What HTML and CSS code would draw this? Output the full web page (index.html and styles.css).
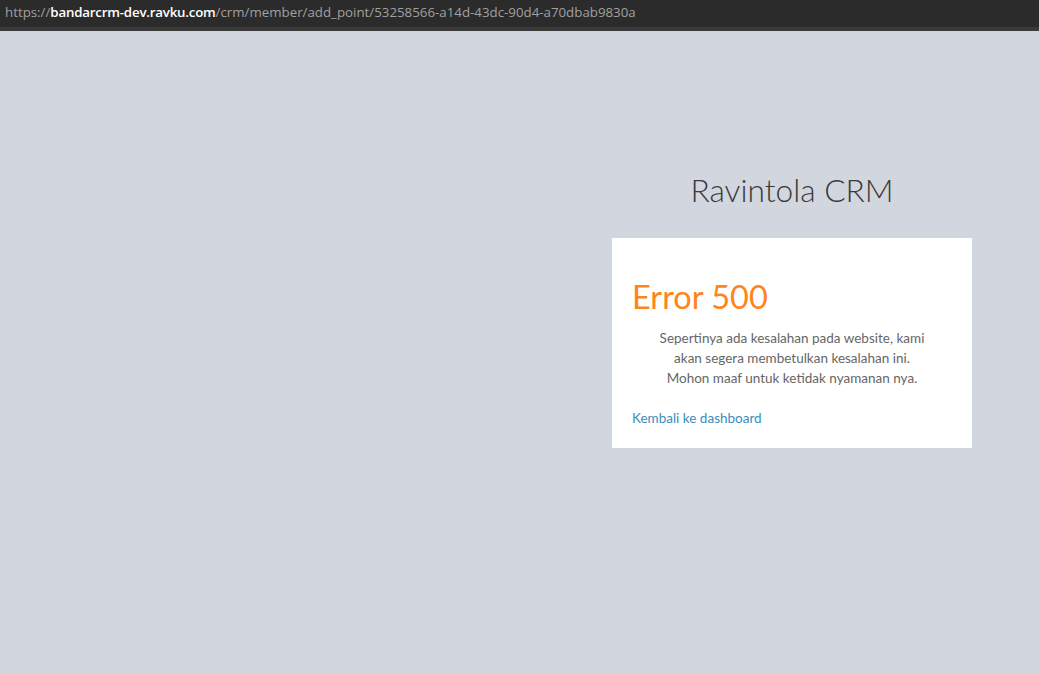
FILE: index.html
```html
<!DOCTYPE html>
<html lang="id">
<head>
<meta charset="utf-8">
<title>Ravintola CRM - Error 500</title>
<link rel="stylesheet" href="styles.css">
</head>
<body>
<div class="urlbar"><span class="scheme">https://</span><span class="host">bandarcrm-dev.ravku.com</span><span class="path">/crm/member/add_point/53258566-a14d-43dc-90d4-a70dbab9830a</span></div>
<main class="page">
  <div class="login-box">
    <div class="login-logo">Ravintola CRM</div>
    <div class="login-box-body">
      <h2 class="headline">Error 500</h2>
      <p class="message">Sepertinya ada kesalahan pada website, kami<br>akan segera membetulkan kesalahan ini.<br>Mohon maaf untuk ketidak nyamanan nya.</p>
      <a class="back" href="#">Kembali ke dashboard</a>
    </div>
  </div>
</main>
</body>
</html>
```
FILE: styles.css
```css
html, body {
  margin: 0;
  padding: 0;
  height: 100%;
}
body {
  background: #d2d6de;
  font-family: Lato, "Open Sans", sans-serif;
  display: flex;
  flex-direction: column;
}
.urlbar {
  height: 27px;
  background: #2b2b2b;
  border-bottom: 4px solid #3a3a3a;
  font-family: "Open Sans", sans-serif;
  font-size: 13.3px;
  line-height: 25px;
  padding-left: 5px;
  color: #a0a0a0;
  white-space: nowrap;
}
.urlbar .host {
  color: #ffffff;
  font-weight: 600;
  letter-spacing: -0.2px;
}
.page {
  flex: 1;
  display: flex;
  justify-content: flex-end;
  padding-right: 67px;
}
.login-box {
  width: 360px;
  padding-top: 136px;
}
.login-logo {
  font-size: 31.7px;
  font-weight: 300;
  color: #3a3a3a;
  text-align: center;
  line-height: 46px;
  margin-bottom: 25px;
}
.login-box-body {
  background: #fff;
  padding: 20px;
}
.headline {
  margin: 19px 0 11px;
  font-size: 32.5px;
  font-weight: 400;
  line-height: 40px;
  color: #ff851b;
}
.message {
  margin: 0 0 20px;
  font-size: 13.5px;
  line-height: 20px;
  color: #666;
  text-align: center;
}
.back {
  display: block;
  font-size: 13.5px;
  line-height: 20px;
  color: #3c8dbc;
  text-decoration: none;
}
```
